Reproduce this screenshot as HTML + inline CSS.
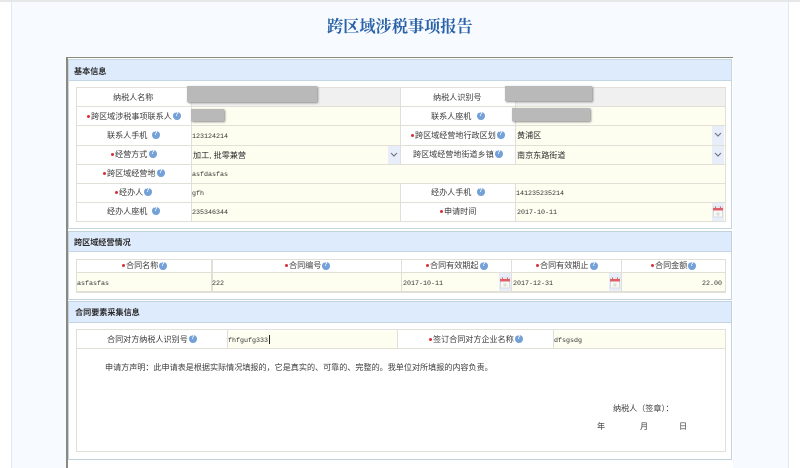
<!DOCTYPE html>
<html lang="zh-CN"><head><meta charset="utf-8"><title>跨区域涉税事项报告</title>
<style>
html,body{margin:0;padding:0;width:800px;height:468px;overflow:hidden;background:#fff}
body{font-family:"Liberation Sans","Noto Sans CJK SC",sans-serif;font-size:8.08px;color:#3c3c3c}
#w{position:absolute;left:0;top:0;width:800px;height:468px;overflow:hidden;filter:blur(.3px)}
#w div,#w span{position:absolute;box-sizing:border-box}
.l,.v,.c,.s{transform:translateY(1px)}
.l{white-space:nowrap;line-height:10px;height:10px}
.v{white-space:nowrap;font-family:"Liberation Mono","Noto Sans CJK SC",monospace;font-size:6.67px;line-height:10px;height:10px;color:#333}
.c{white-space:nowrap;line-height:10px;height:10px;color:#2c2c2c}
.s{white-space:nowrap;font-weight:bold;line-height:10px;height:10px;color:#2c2c2c;font-size:8.1px}
.tc{font-family:"Liberation Sans","Noto Sans CJK TC",sans-serif}
.r{width:3px;height:3px;border-radius:50%;background:#d8303a}
.h{width:7.5px;height:7.5px;border-radius:50%;background:#74a2d8;color:#fff;font:bold 6px/7.5px "Liberation Sans",sans-serif;text-align:center}
.b{background:#e0e0d8}
.g{background:#b9b9b9;box-shadow:1px 1px 2px #888}
.y{background:#fdfdf0}
.p{background:#deebfc;border-bottom:1px solid #c4d6e4}
.ar{width:12px;background:#e8eef9}
.cal{width:12px;height:19px;background:#e8eef9}
</style></head><body><div id="w">
<div style="left:0;top:0;width:800px;height:2px;background:#e6e8e8"></div>
<div style="left:11px;top:2px;width:778px;height:466px;background:#f7fbff;border-left:1px solid #dceaf0;border-right:1px solid #dceaf0"></div>

<div style="left:327px;top:16.5px;width:160px;height:20px;white-space:nowrap;font-family:'Liberation Serif','Noto Serif CJK SC',serif;font-weight:bold;font-size:16.2px;line-height:20px;color:#2a62a8">跨区域涉税事项报告</div>

<!-- frame -->
<div style="left:66px;top:57px;width:667px;height:411px;background:#fff;border-left:2px solid #8a8a80;border-top:1px solid #8a8a78"></div>

<!-- panels -->
<div style="left:68px;top:59px;width:664px;height:170px;background:#fff;border:1px solid #c6d6e0"></div>
<div class="p" style="left:69px;top:60px;width:662px;height:21px"></div>
<div style="left:68px;top:231px;width:664px;height:69px;background:#fff;border:1px solid #c0d2de"></div>
<div class="p" style="left:69px;top:232px;width:662px;height:20px"></div>
<div style="left:68px;top:301px;width:664px;height:159px;background:#fff;border:1px solid #c0d2de"></div>
<div class="p" style="left:69px;top:302px;width:662px;height:21px"></div>

<div class="s" style="left:74px;top:66px">基本信息</div>
<div class="s" style="left:74px;top:237px">跨区域经营情况</div>
<div class="s" style="left:75px;top:307px">合同要素采集信息</div>

<!-- table 1 backgrounds -->
<div style="left:191px;top:88px;width:209px;height:18px;background:#f0f0f0"></div>
<div style="left:516px;top:88px;width:209px;height:18px;background:#f0f0f0"></div>
<div class="y" style="left:191px;top:107px;width:209px;height:18px"></div>
<div class="y" style="left:516px;top:107px;width:209px;height:18px"></div>
<div class="y" style="left:191px;top:126px;width:209px;height:19px"></div>
<div class="y" style="left:516px;top:126px;width:209px;height:19px"></div>
<div class="y" style="left:191px;top:146px;width:209px;height:18px"></div>
<div class="y" style="left:516px;top:146px;width:209px;height:18px"></div>
<div class="y" style="left:191px;top:165px;width:534px;height:18px"></div>
<div class="y" style="left:191px;top:184px;width:209px;height:18px"></div>
<div class="y" style="left:516px;top:184px;width:209px;height:18px"></div>
<div class="y" style="left:191px;top:203px;width:209px;height:18px"></div>
<div class="y" style="left:516px;top:203px;width:209px;height:18px"></div>
<div class="ar" style="left:388px;top:146px;height:18px"></div>
<div class="ar" style="left:712px;top:126px;height:19px"></div>
<div class="ar" style="left:712px;top:146px;height:18px"></div>
<div class="cal" style="left:712px;top:203px"></div>

<!-- table 1 lines -->
<div class="b" style="left:76px;top:87px;width:650px;height:1px"></div>
<div class="b" style="left:76px;top:106px;width:650px;height:1px"></div>
<div class="b" style="left:76px;top:125px;width:650px;height:1px"></div>
<div class="b" style="left:76px;top:145px;width:650px;height:1px"></div>
<div class="b" style="left:76px;top:164px;width:650px;height:1px"></div>
<div class="b" style="left:76px;top:183px;width:650px;height:1px"></div>
<div class="b" style="left:76px;top:202px;width:650px;height:1px"></div>
<div class="b" style="left:76px;top:221px;width:650px;height:1px"></div>
<div class="b" style="left:76px;top:87px;width:1px;height:135px"></div>
<div class="b" style="left:191px;top:87px;width:1px;height:135px"></div>
<div class="b" style="left:400px;top:87px;width:1px;height:78px"></div>
<div class="b" style="left:400px;top:183px;width:1px;height:39px"></div>
<div class="b" style="left:515px;top:87px;width:1px;height:78px"></div>
<div class="b" style="left:515px;top:183px;width:1px;height:39px"></div>
<div class="b" style="left:725px;top:87px;width:1px;height:135px"></div>

<!-- table 1 labels -->
<div class="l" style="left:113px;top:92px">纳税人名称</div>
<span class="r" style="left:87px;top:115px"></span><div class="l" style="left:91px;top:111px">跨区域涉税事项联系人</div><span class="h" style="left:173px;top:112px">?</span>
<div class="l" style="left:107px;top:130px">联系人手机</div><span class="h" style="left:152px;top:131px">?</span>
<span class="r" style="left:111px;top:153px"></span><div class="l" style="left:115px;top:149px">经营方式</div><span class="h" style="left:149px;top:150px">?</span>
<span class="r" style="left:103px;top:172px"></span><div class="l" style="left:107px;top:168px">跨区域经营地</div><span class="h" style="left:157px;top:169px">?</span>
<span class="r" style="left:115px;top:191px"></span><div class="l" style="left:119px;top:187px">经办人</div><span class="h" style="left:144px;top:188px">?</span>
<div class="l" style="left:107px;top:206px">经办人座机</div><span class="h" style="left:152px;top:207px">?</span>

<div class="l" style="left:433px;top:92px">纳税人识别号</div>
<div class="l" style="left:431px;top:111px">联系人座机</div><span class="h" style="left:477px;top:112px">?</span>
<span class="r" style="left:411px;top:134px"></span><div class="l" style="left:415px;top:130px">跨区域经营地行政区划</div><span class="h" style="left:497px;top:131px">?</span>
<div class="l" style="left:413px;top:149px">跨区域经营地街道乡镇</div><span class="h" style="left:495px;top:150px">?</span>
<div class="l" style="left:431px;top:187px">经办人手机</div><span class="h" style="left:477px;top:188px">?</span>
<span class="r" style="left:440px;top:210px"></span><div class="l" style="left:444px;top:206px">申请时间</div>

<!-- table 1 values -->
<div class="v" style="left:192px;top:131px">123124214</div>
<div class="c" style="left:193px;top:150px">加工, 批零兼营</div>
<div class="v" style="left:192px;top:169px">asfdasfas</div>
<div class="v" style="left:192px;top:188px">gfh</div>
<div class="v" style="left:192px;top:207px">235346344</div>
<div class="c" style="left:517px;top:130px">黄浦区</div>
<div class="c" style="left:517px;top:150px">南京东路街道</div>
<div class="v" style="left:516px;top:188px">141235235214</div>
<div class="v" style="left:517px;top:207px">2017-10-11</div>

<svg style="position:absolute;left:388px;top:150px" width="12" height="10"><path d="M3 3l3 3 3-3" fill="none" stroke="#778" stroke-width="1.2"/></svg>
<svg style="position:absolute;left:712px;top:130px" width="12" height="10"><path d="M3 3l3 3 3-3" fill="none" stroke="#778" stroke-width="1.2"/></svg>
<svg style="position:absolute;left:712px;top:150px" width="12" height="10"><path d="M3 3l3 3 3-3" fill="none" stroke="#778" stroke-width="1.2"/></svg>
<svg style="position:absolute;left:713px;top:206px" width="10" height="12"><rect x=".5" y="1" width="9" height="10" fill="#f8f8f4" stroke="#ccc" stroke-width=".6"/><path d="M0 2h2V0.5h1V2h4V0.5h1V2h2v2.5H0z" fill="#e0606a"/><rect x="3.5" y="6.5" width="3" height="3" fill="#ddd"/></svg>

<!-- redactions -->
<div class="g" style="left:187px;top:86px;width:130px;height:16px"></div>
<div class="g" style="left:191px;top:109px;width:33px;height:12px"></div>
<div class="g" style="left:505px;top:86px;width:87px;height:15px"></div>
<div class="g" style="left:512px;top:108px;width:78px;height:13px"></div>

<!-- table 2 -->
<div class="y" style="left:76px;top:273px;width:650px;height:19px"></div>
<div class="cal" style="left:499px;top:273px;height:19px"></div>
<div class="cal" style="left:609px;top:273px;height:19px"></div>
<div class="b" style="left:76px;top:259px;width:650px;height:1px"></div>
<div class="b" style="left:76px;top:272px;width:650px;height:1px"></div>
<div class="b" style="left:76px;top:291px;width:650px;height:2px"></div>
<div class="b" style="left:76px;top:259px;width:1px;height:34px"></div>
<div class="b" style="left:211px;top:259px;width:2px;height:34px"></div>
<div class="b" style="left:401px;top:259px;width:1px;height:34px"></div>
<div class="b" style="left:511px;top:259px;width:1px;height:34px"></div>
<div class="b" style="left:621px;top:259px;width:1px;height:34px"></div>
<div class="b" style="left:725px;top:259px;width:1px;height:34px"></div>

<span class="r" style="left:122px;top:264px"></span><div class="l" style="left:126px;top:260px">合同名称</div><span class="h" style="left:159px;top:262px">?</span>
<span class="r" style="left:285px;top:264px"></span><div class="l" style="left:289px;top:260px">合同编号</div><span class="h" style="left:322px;top:262px">?</span>
<span class="r" style="left:426px;top:264px"></span><div class="l" style="left:430px;top:260px">合同有效期起</div><span class="h" style="left:480px;top:262px">?</span>
<span class="r" style="left:536px;top:264px"></span><div class="l" style="left:540px;top:260px">合同有效期止</div><span class="h" style="left:590px;top:262px">?</span>
<span class="r" style="left:651px;top:264px"></span><div class="l" style="left:655px;top:260px">合同金额</div><span class="h" style="left:688px;top:262px">?</span>

<div class="v" style="left:77px;top:278px">asfasfas</div>
<div class="v" style="left:212px;top:278px">222</div>
<div class="v" style="left:403px;top:278px">2017-10-11</div>
<div class="v" style="left:513px;top:278px">2017-12-31</div>
<div class="v" style="left:702px;top:278px">22.00</div>
<svg style="position:absolute;left:500px;top:277px" width="10" height="12"><rect x=".5" y="1" width="9" height="10" fill="#f8f8f4" stroke="#ccc" stroke-width=".6"/><path d="M0 2h2V0.5h1V2h4V0.5h1V2h2v2.5H0z" fill="#e0606a"/><rect x="3.5" y="6.5" width="3" height="3" fill="#ddd"/></svg>
<svg style="position:absolute;left:610px;top:277px" width="10" height="12"><rect x=".5" y="1" width="9" height="10" fill="#f8f8f4" stroke="#ccc" stroke-width=".6"/><path d="M0 2h2V0.5h1V2h4V0.5h1V2h2v2.5H0z" fill="#e0606a"/><rect x="3.5" y="6.5" width="3" height="3" fill="#ddd"/></svg>

<!-- table 3 -->
<div class="y" style="left:227px;top:331px;width:170px;height:18px"></div>
<div class="y" style="left:553px;top:331px;width:172px;height:18px"></div>
<div class="b" style="left:76px;top:329px;width:650px;height:1px"></div>
<div class="b" style="left:76px;top:348px;width:650px;height:1px"></div>
<div class="b" style="left:76px;top:451px;width:650px;height:1px"></div>
<div class="b" style="left:76px;top:329px;width:1px;height:123px"></div>
<div class="b" style="left:227px;top:329px;width:1px;height:20px"></div>
<div class="b" style="left:397px;top:329px;width:1px;height:20px"></div>
<div class="b" style="left:553px;top:329px;width:1px;height:20px"></div>
<div class="b" style="left:725px;top:329px;width:1px;height:123px"></div>

<div class="l" style="left:107px;top:334px">合同对方纳税人识别号</div><span class="h" style="left:189px;top:335px">?</span>
<span class="r" style="left:429px;top:338px"></span><div class="l" style="left:433px;top:334px">签订合同对方企业名称</div><span class="h" style="left:515px;top:335px">?</span>
<div class="v" style="left:228px;top:335px">fhfgufg333</div>
<div style="left:269px;top:335px;width:1px;height:9px;background:#222"></div>
<div class="v" style="left:554px;top:335px">dfsgsdg</div>

<div class="l tc" style="left:105px;top:362px">申请方声明：此申请表是根据实际情况填报的，它是真实的、可靠的、完整的。我单位对所填报的内容负责。</div>
<div class="l tc" style="left:613px;top:403px">纳税人（签章）：</div>
<div class="l" style="left:597px;top:421px">年</div>
<div class="l" style="left:640px;top:421px">月</div>
<div class="l" style="left:679px;top:421px">日</div>
</div></body></html>
